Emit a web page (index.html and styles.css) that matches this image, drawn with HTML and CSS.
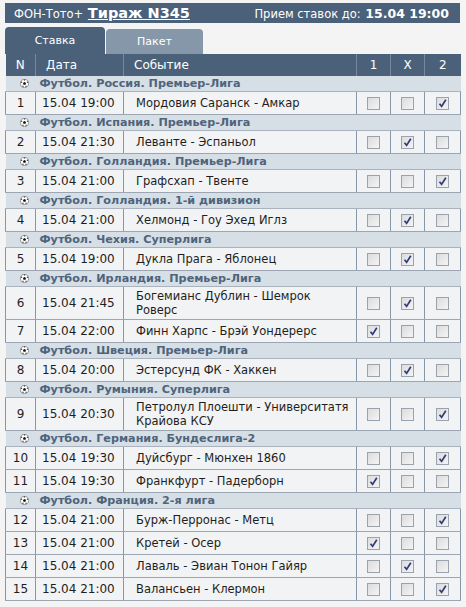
FILE: index.html
```html
<!DOCTYPE html>
<html lang="ru">
<head>
<meta charset="utf-8">
<link rel="stylesheet" href="styles.css">
</head>
<body>
<div class="wrap">
  <div class="topbar">
    <div class="tb-left">ФОН-Тото+ <a class="draw" href="#">Тираж N345</a></div>
    <div class="tb-right">Прием ставок до: <b>15.04 19:00</b></div>
  </div>
  <div class="tabs">
    <div class="tab active">Ставка</div>
    <div class="tab">Пакет</div>
  </div>
  <table class="grid">
    <colgroup><col class="c-n"><col class="c-d"><col class="c-e"><col class="c-o"><col class="c-o"><col class="c-o2"></colgroup>
    <thead>
      <tr><th>N</th><th class="l">Дата</th><th class="l">Событие</th><th>1</th><th>X</th><th>2</th></tr>
    </thead>
    <tbody id="rows"></tbody>
  </table>
</div>
<script>
var data = [
 ["Футбол. Россия. Премьер-Лига", [[1,"15.04 19:00","Мордовия Саранск - Амкар",2]]],
 ["Футбол. Испания. Премьер-Лига", [[2,"15.04 21:30","Леванте - Эспаньол",1]]],
 ["Футбол. Голландия. Премьер-Лига", [[3,"15.04 21:00","Графсхап - Твенте",2]]],
 ["Футбол. Голландия. 1-й дивизион", [[4,"15.04 21:00","Хелмонд - Гоу Эхед Иглз",1]]],
 ["Футбол. Чехия. Суперлига", [[5,"15.04 19:00","Дукла Прага - Яблонец",1]]],
 ["Футбол. Ирландия. Премьер-Лига", [[6,"15.04 21:45","Богемианс Дублин - Шемрок Роверс",1],[7,"15.04 22:00","Финн Харпс - Брэй Уондерерс",0]]],
 ["Футбол. Швеция. Премьер-Лига", [[8,"15.04 20:00","Эстерсунд ФК - Хаккен",1]]],
 ["Футбол. Румыния. Суперлига", [[9,"15.04 20:30","Петролул Плоешти - Университатя Крайова КСУ",2]]],
 ["Футбол. Германия. Бундеслига-2", [[10,"15.04 19:30","Дуйсбург - Мюнхен 1860",2],[11,"15.04 19:30","Франкфурт - Падерборн",0]]],
 ["Футбол. Франция. 2-я лига", [[12,"15.04 21:00","Бурж-Перронас - Метц",2],[13,"15.04 21:00","Кретей - Осер",0],[14,"15.04 21:00","Лаваль - Эвиан Тонон Гайяр",1],[15,"15.04 21:00","Валансьен - Клермон",2]]]
];
var ball = '<svg class="ball" viewBox="0 0 10 10" width="9" height="9"><circle cx="5" cy="5" r="4.5" fill="#fff" stroke="#777" stroke-width="0.8"/><polygon points="5,3.2 6.7,4.4 6.1,6.4 3.9,6.4 3.3,4.4" fill="#111"/><path d="M1.2 3.2 L2.3 4 M8.8 3.2 L7.7 4 M3 8.6 L3.6 7.4 M7 8.6 L6.4 7.4 M5 0.6 L5 1.8" stroke="#222" stroke-width="1.2"/></svg>';
var chk = '<svg viewBox="0 0 11 11" width="11" height="11"><path d="M2.5 5.8 L4.6 8.4 L8.8 1.8" fill="none" stroke="#2f3a78" stroke-width="1.7"/></svg>';
var html = "";
data.forEach(function(g){
  html += '<tr class="grp"><td colspan="6">' + ball + '<span>' + g[0] + '</span></td></tr>';
  g[1].forEach(function(r){
    html += '<tr class="ev"><td class="n">' + r[0] + '</td><td class="d">' + r[1] + '</td><td class="e">' + r[2] + '</td>';
    for (var i = 0; i < 3; i++) {
      html += '<td class="o"><span class="cb">' + (r[3] === i ? chk : '') + '</span></td>';
    }
    html += '</tr>';
  });
});
document.getElementById("rows").innerHTML = html;
</script>
</body>
</html>
```

FILE: styles.css
```css
body {
  margin: 0;
  background: #f4f4f4;
  font-family: "DejaVu Sans", Verdana, sans-serif;
  color: #1e1e1e;
}
.wrap {
  width: 455px;
  padding: 3px 0 0 5px;
}
.topbar {
  height: 20px;
  background: #4b6179;
  color: #fff;
  display: flex;
  align-items: center;
  justify-content: space-between;
  padding: 0 11px 0 9px;
}
.tb-left {
  font-size: 11.5px;
}
.draw {
  color: #fff;
  font-weight: bold;
  font-size: 14.5px;
  text-decoration: underline;
  margin-left: 1px;
}
.tb-right {
  font-size: 11.5px;
}
.tb-right b {
  font-size: 12.5px;
  margin-left: 1px;
}
.tabs {
  display: flex;
  gap: 1px;
  margin-top: 4px;
  height: 27px;
  align-items: flex-end;
}
.tab {
  width: 97px;
  height: 25px;
  background: #8797aa;
  color: #fff;
  font-size: 11px;
  border-radius: 4px 4px 0 0;
  display: flex;
  align-items: center;
  justify-content: center;
}
.tab.active {
  width: 100px;
  height: 27px;
  background: #4b6179;
}
.grid {
  width: 455px;
  border-collapse: collapse;
  table-layout: fixed;
  font-size: 12px;
}
.c-n { width: 30px; }
.c-d { width: 88px; }
.c-e { width: 233px; }
.c-o { width: 34px; }
.c-o2 { width: 36px; }
.grid th {
  background: #4b6179;
  color: #fff;
  font-weight: normal;
  height: 22px;
  padding: 0;
  text-align: center;
  border-left: 1px solid #7689a0;
}
.grid th:first-child { border-left: none; }
.grid th.l {
  text-align: left;
  padding-left: 10px;
}
.grp td {
  background: #d6dee6;
  height: 15px;
  padding: 0;
  border-bottom: 1px solid #aab3bd;
  font-size: 11.2px;
  font-weight: bold;
  color: #4f647b;
  white-space: nowrap;
  line-height: 15px;
}
.ball {
  vertical-align: -1px;
  margin: 0 11px 0 14px;
}
.ev td {
  background: #f2f3f4;
  height: 18px;
  padding: 2px 0;
  border-bottom: 1px solid #9ba6b2;
  border-left: 1px solid #8797aa;
  line-height: 14px;
}
.ev td:first-child { border-left: 1px solid #8797aa; }
.ev td:last-child { border-right: 1px solid #8797aa; }
.ev td.n { text-align: center; }
.ev td.d { padding-left: 6px; white-space: nowrap; }
.ev td.e { padding-left: 12px; padding-right: 4px; font-size: 11.5px; }
.ev td.o { text-align: center; }
.cb {
  display: inline-block;
  width: 11px;
  height: 11px;
  border: 1px solid #9aa3ad;
  background: linear-gradient(135deg, #dcdcdc, #f4f4f4);
  vertical-align: middle;
  box-sizing: content-box;
}
.cb svg { display: block; }
```
